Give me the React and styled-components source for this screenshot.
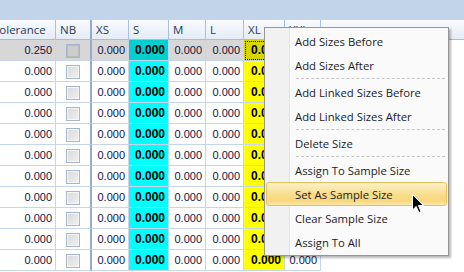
import React from 'react';
import styled, { createGlobalStyle } from 'styled-components';

const GlobalStyle = createGlobalStyle`
  body {
    margin: 0;
    background: #ffffff;
    overflow: hidden;
  }
`;

const columns = [
  { key: 'tol', label: 'Tolerance', width: 67 },
  { key: 'nb', label: 'NB', width: 36, check: true, divider: true },
  { key: 'xs', label: 'XS', width: 37 },
  { key: 's', label: 'S', width: 40, tint: 'cyan' },
  { key: 'm', label: 'M', width: 37 },
  { key: 'l', label: 'L', width: 38 },
  { key: 'xl', label: 'XL', width: 41, tint: 'yellow' },
  { key: 'xxl', label: 'XXL', width: 36 },
];

const rows = Array.from({ length: 11 }, (_, i) => ({
  tol: i === 0 ? '0.250' : '0.000',
  selected: i === 0,
}));

const menuItems = [
  { label: 'Add Sizes Before' },
  { label: 'Add Sizes After', sep: true },
  { label: 'Add Linked Sizes Before' },
  { label: 'Add Linked Sizes After', sep: true },
  { label: 'Delete Size', sep: true },
  { label: 'Assign To Sample Size' },
  { label: 'Set As Sample Size', hot: true },
  { label: 'Clear Sample Size' },
  { label: 'Assign To All' },
];

const tints = {
  cyan: { normal: '#00ffff', selected: '#00cfcf' },
  yellow: { normal: '#ffff00', selected: '#d6d600' },
};

const cellBg = (tint, selected) => {
  if (tint) return selected ? tints[tint].selected : tints[tint].normal;
  return selected ? '#d7d7d7' : '#ffffff';
};

const Screen = styled.div`
  position: relative;
  width: 464px;
  height: 272px;
  overflow: hidden;
  font-family: "Liberation Sans", Arial, sans-serif;
`;

const TopBand = styled.div`
  height: 20px;
  background: #c2d4e9;
`;

const Grid = styled.div`
  overflow: hidden;
`;

const GridInner = styled.div`
  margin-left: -11px;
`;

const HeaderRow = styled.div`
  display: flex;
  height: 20px;
  background: linear-gradient(#f9fbfe, #e5ecf6);
  border-bottom: 1px solid #a6bcd8;
  box-sizing: border-box;
`;

const HeaderCell = styled.div`
  flex: 0 0 ${(p) => p.$w}px;
  box-sizing: border-box;
  border-right: ${(p) => (p.$divider ? '2px solid #98acc7' : '1px solid #aac0dc')};
  padding: 2px 0 0 4px;
  font-family: "Open Sans", "Noto Sans", sans-serif;
  font-size: 11.5px;
  color: #1e395b;
  white-space: nowrap;
  overflow: hidden;
`;

const Row = styled.div`
  display: flex;
  height: 21px;
`;

const Cell = styled.div`
  flex: 0 0 ${(p) => p.$w}px;
  box-sizing: border-box;
  display: flex;
  align-items: center;
  justify-content: ${(p) => (p.$check ? 'center' : 'flex-end')};
  padding-right: ${(p) => (p.$check ? 0 : 3)}px;
  background: ${(p) => p.$bg};
  border-right: ${(p) => (p.$divider ? '2px solid #98acc7' : '1px solid #c4d5ec')};
  border-bottom: 1px solid #c4d5ec;
  font-size: ${(p) => (p.$bold ? 12 : 11)}px;
  font-weight: ${(p) => (p.$bold ? 700 : 400)};
  color: ${(p) => (p.$bold ? '#000000' : '#14143c')};
  white-space: nowrap;
  overflow: hidden;
  outline: ${(p) => (p.$focus ? '1px dotted #000' : 'none')};
  outline-offset: -2px;
`;

const CheckBox = styled.span`
  width: 14px;
  height: 14px;
  box-sizing: border-box;
  border: 1px solid #a4b5cd;
  background: ${(p) => (p.$selected ? '#cdcdcd' : 'linear-gradient(135deg, #d9d9d9, #f0f0f0)')};
  box-shadow: inset 0 0 0 1px ${(p) => (p.$selected ? '#bcbcbc' : '#f6f6f6')};
  margin-top: 1px;
`;

const Menu = styled.div`
  position: absolute;
  left: 264px;
  top: 27px;
  width: 185px;
  box-sizing: border-box;
  padding: 1px 1px;
  background: linear-gradient(to right, #f1f1f1 0, #f1f1f1 24px, #e2e3e3 24px, #e2e3e3 25px, #ffffff 25px, #fafafa 26px);
  border: 1px solid #979797;
  box-shadow: 2px 2px 2px rgba(0, 0, 0, 0.28);
`;

const MenuItem = styled.div`
  height: 24px;
  box-sizing: border-box;
  display: flex;
  align-items: center;
  padding-left: 28px;
  font-family: "Open Sans", "Noto Sans", sans-serif;
  font-size: 11.3px;
  color: #1b1b25;
  border: 1px solid ${(p) => (p.$hot ? '#e4c262' : 'transparent')};
  border-radius: 3px;
  background: ${(p) => (p.$hot ? 'linear-gradient(#fdf1c8, #f9dc8a 55%, #f8d77e 80%, #fbe6a8)' : 'transparent')};
`;

const Separator = styled.div`
  height: 3px;
  margin-left: 30px;
  margin-right: 2px;
  display: flex;
  align-items: center;
  &::after {
    content: '';
    flex: 1;
    border-top: 1px dashed #c6c6c6;
  }
`;

const Cursor = styled.svg`
  position: absolute;
  left: 412px;
  top: 194px;
`;

export default function App() {
  return (
    <Screen>
      <GlobalStyle />
      <TopBand />
      <Grid>
        <GridInner>
          <HeaderRow>
            {columns.map((c) => (
              <HeaderCell key={c.key} $w={c.width} $divider={c.divider}>
                {c.label}
              </HeaderCell>
            ))}
          </HeaderRow>
          {rows.map((r, i) => (
            <Row key={i}>
              {columns.map((c) => (
                <Cell
                  key={c.key}
                  $w={c.width}
                  $divider={c.divider}
                  $check={c.check}
                  $bold={!!c.tint}
                  $bg={cellBg(c.tint, r.selected)}
                  $focus={r.selected && c.key === 'xl'}
                >
                  {c.check ? (
                    <CheckBox $selected={r.selected} />
                  ) : c.key === 'tol' ? (
                    r.tol
                  ) : (
                    '0.000'
                  )}
                </Cell>
              ))}
            </Row>
          ))}
        </GridInner>
      </Grid>
      <Menu>
        {menuItems.map((m) => (
          <React.Fragment key={m.label}>
            <MenuItem $hot={m.hot}>{m.label}</MenuItem>
            {m.sep && <Separator />}
          </React.Fragment>
        ))}
      </Menu>
      <Cursor width="13" height="20" viewBox="0 0 13 20">
        <path d="M0.5 0.5 L0.5 16 L4.2 12.4 L6.8 18.6 L9 17.6 L6.5 11.6 L11.5 11.6 Z" fill="#000" stroke="#fff" strokeWidth="1" />
      </Cursor>
    </Screen>
  );
}
